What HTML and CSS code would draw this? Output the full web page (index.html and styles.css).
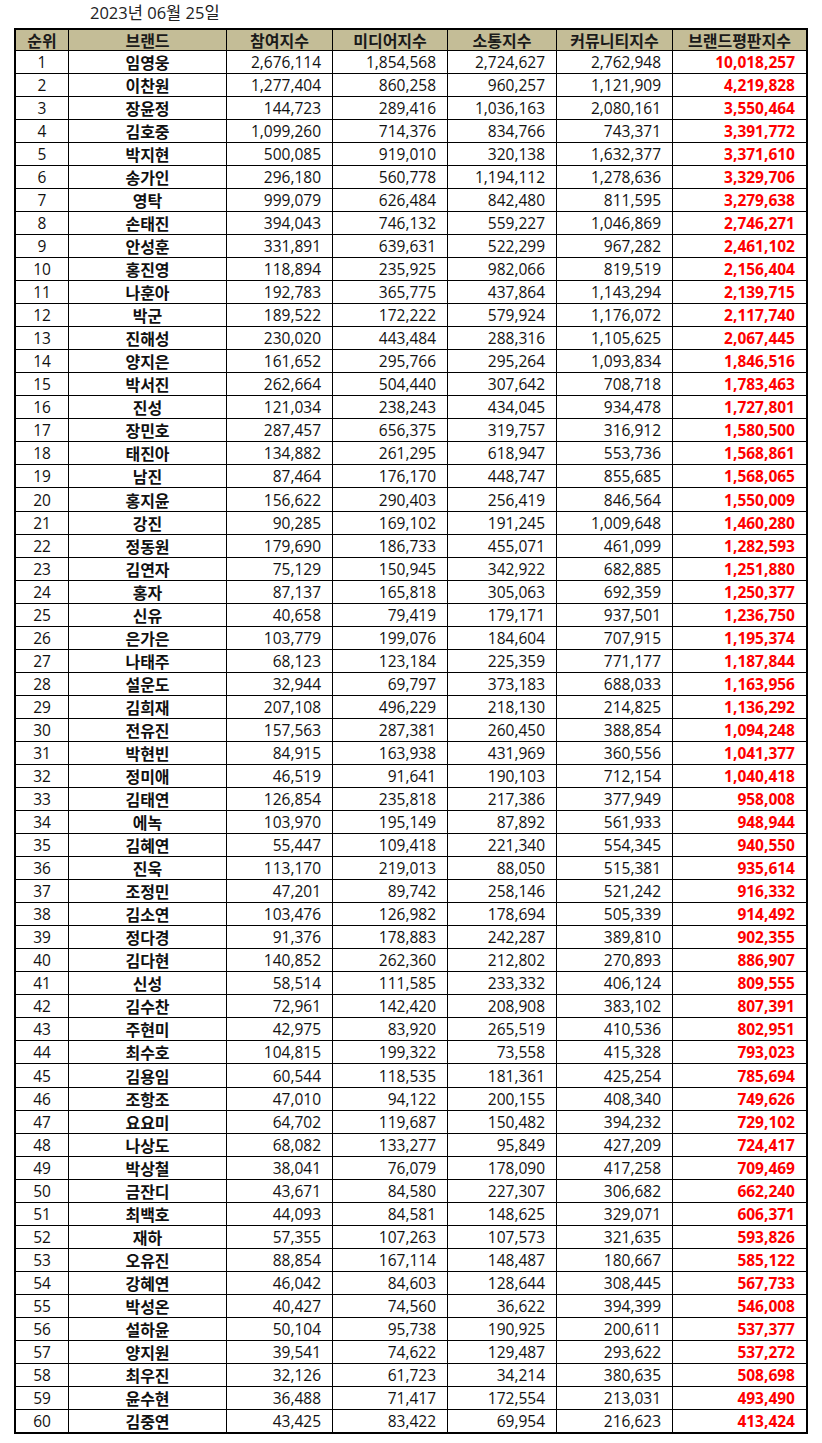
FILE: index.html
```html
<!DOCTYPE html>
<html lang="ko">
<head>
<meta charset="utf-8">
<title>브랜드평판지수</title>
<link rel="stylesheet" href="styles.css">
</head>
<body>
<div class="page">
  <div class="date">2023년 06월 25일</div>
  <div class="sheet" id="sheet">
    <div class="row head">
      <div class="c">순위</div><div class="c">브랜드</div><div class="c">참여지수</div><div class="c">미디어지수</div><div class="c">소통지수</div><div class="c">커뮤니티지수</div><div class="c">브랜드평판지수</div>
    </div>
  </div>
</div>
<script src="app.js"></script>
</body>
</html>
```
FILE: app.js
```js
const data = `임영웅 2,676,114 1,854,568 2,724,627 2,762,948 10,018,257
이찬원 1,277,404 860,258 960,257 1,121,909 4,219,828
장윤정 144,723 289,416 1,036,163 2,080,161 3,550,464
김호중 1,099,260 714,376 834,766 743,371 3,391,772
박지현 500,085 919,010 320,138 1,632,377 3,371,610
송가인 296,180 560,778 1,194,112 1,278,636 3,329,706
영탁 999,079 626,484 842,480 811,595 3,279,638
손태진 394,043 746,132 559,227 1,046,869 2,746,271
안성훈 331,891 639,631 522,299 967,282 2,461,102
홍진영 118,894 235,925 982,066 819,519 2,156,404
나훈아 192,783 365,775 437,864 1,143,294 2,139,715
박군 189,522 172,222 579,924 1,176,072 2,117,740
진해성 230,020 443,484 288,316 1,105,625 2,067,445
양지은 161,652 295,766 295,264 1,093,834 1,846,516
박서진 262,664 504,440 307,642 708,718 1,783,463
진성 121,034 238,243 434,045 934,478 1,727,801
장민호 287,457 656,375 319,757 316,912 1,580,500
태진아 134,882 261,295 618,947 553,736 1,568,861
남진 87,464 176,170 448,747 855,685 1,568,065
홍지윤 156,622 290,403 256,419 846,564 1,550,009
강진 90,285 169,102 191,245 1,009,648 1,460,280
정동원 179,690 186,733 455,071 461,099 1,282,593
김연자 75,129 150,945 342,922 682,885 1,251,880
홍자 87,137 165,818 305,063 692,359 1,250,377
신유 40,658 79,419 179,171 937,501 1,236,750
은가은 103,779 199,076 184,604 707,915 1,195,374
나태주 68,123 123,184 225,359 771,177 1,187,844
설운도 32,944 69,797 373,183 688,033 1,163,956
김희재 207,108 496,229 218,130 214,825 1,136,292
전유진 157,563 287,381 260,450 388,854 1,094,248
박현빈 84,915 163,938 431,969 360,556 1,041,377
정미애 46,519 91,641 190,103 712,154 1,040,418
김태연 126,854 235,818 217,386 377,949 958,008
에녹 103,970 195,149 87,892 561,933 948,944
김혜연 55,447 109,418 221,340 554,345 940,550
진욱 113,170 219,013 88,050 515,381 935,614
조정민 47,201 89,742 258,146 521,242 916,332
김소연 103,476 126,982 178,694 505,339 914,492
정다경 91,376 178,883 242,287 389,810 902,355
김다현 140,852 262,360 212,802 270,893 886,907
신성 58,514 111,585 233,332 406,124 809,555
김수찬 72,961 142,420 208,908 383,102 807,391
주현미 42,975 83,920 265,519 410,536 802,951
최수호 104,815 199,322 73,558 415,328 793,023
김용임 60,544 118,535 181,361 425,254 785,694
조항조 47,010 94,122 200,155 408,340 749,626
요요미 64,702 119,687 150,482 394,232 729,102
나상도 68,082 133,277 95,849 427,209 724,417
박상철 38,041 76,079 178,090 417,258 709,469
금잔디 43,671 84,580 227,307 306,682 662,240
최백호 44,093 84,581 148,625 329,071 606,371
재하 57,355 107,263 107,573 321,635 593,826
오유진 88,854 167,114 148,487 180,667 585,122
강혜연 46,042 84,603 128,644 308,445 567,733
박성온 40,427 74,560 36,622 394,399 546,008
설하윤 50,104 95,738 190,925 200,611 537,377
양지원 39,541 74,622 129,487 293,622 537,272
최우진 32,126 61,723 34,214 380,635 508,698
윤수현 36,488 71,417 172,554 213,031 493,490
김중연 43,425 83,422 69,954 216,623 413,424`;

const sheet = document.getElementById('sheet');
data.split('\n').forEach((line, i) => {
  const [name, a, b, c, d, total] = line.trim().split(' ');
  const row = document.createElement('div');
  row.className = 'row' + ((i === 19 || i === 44) ? ' tall' : '');
  row.innerHTML =
    `<div class="c rank">${i + 1}</div>` +
    `<div class="c name">${name}</div>` +
    `<div class="c num">${a}</div>` +
    `<div class="c num">${b}</div>` +
    `<div class="c num">${c}</div>` +
    `<div class="c num">${d}</div>` +
    `<div class="c num total">${total}</div>`;
  sheet.appendChild(row);
});
```
FILE: styles.css
```css
html, body {
  margin: 0;
  padding: 0;
  background: #fff;
}

body {
  font-family: "Open Sans", "Noto Sans CJK KR", sans-serif;
  font-size: 15.5px;
  color: #111;
}

.page {
  padding-left: 14px;
  width: 794px;
}

.date {
  height: 28px;
  line-height: 26px;
  padding-left: 76px;
  font-size: 16.5px;
  color: #222;
}

.sheet {
  border: 2px solid #000;
  background: #000;
  display: flex;
  flex-direction: column;
  gap: 1px;
  width: 790px;
}

.row {
  display: grid;
  grid-template-columns: 52px 157px 105px 114px 108px 115px 133px;
  gap: 1px;
  height: 22px;
}

.row.tall {
  height: 23px;
}

.row.head {
  height: 20px;
}

.c {
  background: #fff;
  display: flex;
  align-items: center;
  justify-content: center;
  line-height: 20px;
  white-space: nowrap;
}

.head .c {
  background: #c4bd97;
  font-family: "Noto Sans CJK KR", sans-serif;
  font-size: 16px;
  font-weight: 700;
  color: #1a1a1a;
}

.name {
  font-family: "Noto Sans CJK KR", sans-serif;
  font-size: 16px;
  font-weight: 700;
}

.num {
  justify-content: flex-end;
  padding-right: 11px;
}

.total {
  color: #ff0000;
  font-weight: 700;
}
```
